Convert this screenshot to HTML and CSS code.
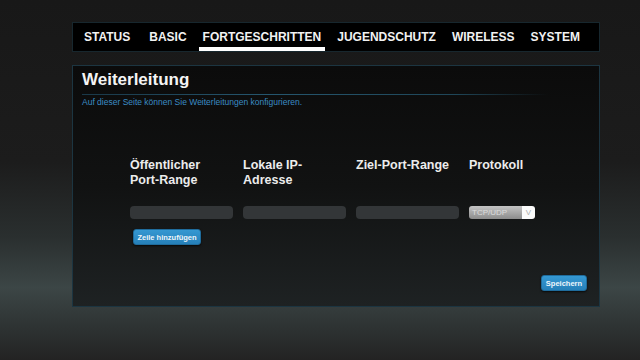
FILE: index.html
```html
<!DOCTYPE html>
<html lang="de">
<head>
  <meta charset="UTF-8" />
  <title>Weiterleitung</title>
  <link rel="stylesheet" href="styles.css">
</head>
<body>
  <div class="wrap">
    <nav class="menu">
      <a class="item">STATUS</a>
      <a class="item">BASIC</a>
      <a class="item active">FORTGESCHRITTEN</a>
      <a class="item">JUGENDSCHUTZ</a>
      <a class="item">WIRELESS</a>
      <a class="item">SYSTEM</a>
    </nav>

    <div class="panel">
      <h1>Weiterleitung</h1>
      <div class="rule"></div>
      <p class="intro">Auf dieser Seite können Sie Weiterleitungen konfigurieren.</p>

      <div class="table">
        <div class="row head">
          <div class="col">Öffentlicher<br>Port-Range</div>
          <div class="col">Lokale IP-<br>Adresse</div>
          <div class="col">Ziel-Port-Range</div>
          <div class="col">Protokoll</div>
        </div>
        <div class="row fields">
          <div class="col"><input type="text" /></div>
          <div class="col"><input type="text" /></div>
          <div class="col"><input type="text" /></div>
          <div class="col">
            <div class="select">
              <span class="value">TCP/UDP</span>
              <span class="arrow">V</span>
            </div>
          </div>
        </div>
        <button class="btn add">Zeile hinzufügen</button>
      </div>

      <div class="footer">
        <button class="btn">Speichern</button>
      </div>
    </div>
  </div>
</body>
</html>
```

FILE: styles.css
```css
* {
  box-sizing: border-box;
}
html, body {
  margin: 0;
  height: 360px;
}
body {
  font-family: 'Liberation Sans', Arial, sans-serif;
  background: linear-gradient(to bottom, #181818 0%, #1c1c1c 45%, #2a2f2f 66%, #3c4646 80%, #303636 89%, #232323 100%);
  overflow: hidden;
}
.wrap {
  width: 528px;
  margin-left: 72px;
  padding-top: 22px;
}
.menu {
  display: flex;
  gap: 8px;
  height: 30px;
  padding-left: 7px;
  background: #000;
  border: 1px solid #17272e;
}
.item {
  height: 28px;
  padding: 7px 4px 0;
  font-size: 12px;
  line-height: 14px;
  font-weight: bold;
  color: #f2f2f2;
}
.item:first-child {
  margin-right: 3px;
}
.item.active {
  border-bottom: 4px solid #fff;
}
.panel {
  margin-top: 13px;
  height: 242px;
  padding: 4px 12px 0 9px;
  background: linear-gradient(to bottom, #0b0b0b 0%, #111212 50%, #1e2223 100%);
  border: 1px solid #1c3541;
  display: flex;
  flex-direction: column;
}
h1 {
  margin: 0;
  font-size: 17px;
  line-height: 20px;
  color: #f4f4f4;
}
.rule {
  margin-top: 4px;
  height: 1px;
  width: 466px;
  background: linear-gradient(to right, #1a3848 0%, #25566e 40%, #1f4658 80%, rgba(31, 70, 88, 0) 100%);
}
.intro {
  margin: 2px 0 0;
  font-size: 8.5px;
  line-height: 10px;
  color: #3b8cc4;
}
.table {
  margin: 51px 0 0 48px;
}
.row {
  display: flex;
}
.col {
  width: 113px;
}
.head .col {
  height: 30px;
  font-size: 12.5px;
  line-height: 15px;
  font-weight: bold;
  color: #ececec;
}
.fields {
  margin-top: 18px;
}
input {
  display: block;
  width: 103px;
  height: 13px;
  border: none;
  border-radius: 4px;
  background: #333638;
}
.select {
  display: flex;
  width: 66px;
  height: 13px;
  border-radius: 3px;
  overflow: hidden;
  font-size: 8px;
  line-height: 13px;
}
.select .value {
  flex: 1;
  padding-left: 3px;
  color: #dcdcdc;
  background: linear-gradient(to bottom, #c4c4c4, #8c8c8c);
}
.select .arrow {
  width: 13px;
  text-align: center;
  color: #b0b0b0;
  background: #fbfbfb;
}
.btn {
  height: 16px;
  padding: 0;
  white-space: nowrap;
  text-align: center;
  font-family: 'Liberation Sans', Arial, sans-serif;
  font-size: 7.5px;
  font-weight: bold;
  color: #eef6fb;
  background: linear-gradient(to bottom, #3598d2, #2680b9);
  border: 1px solid #1f6c9c;
  border-radius: 3px;
  box-shadow: 0 1px 2px rgba(0, 0, 0, 0.7);
}
.add {
  display: block;
  width: 68px;
  margin: 10px 0 0 3px;
}
.footer {
  display: flex;
  justify-content: flex-end;
  margin-top: 30px;
}
.footer .btn {
  width: 46px;
}
```
